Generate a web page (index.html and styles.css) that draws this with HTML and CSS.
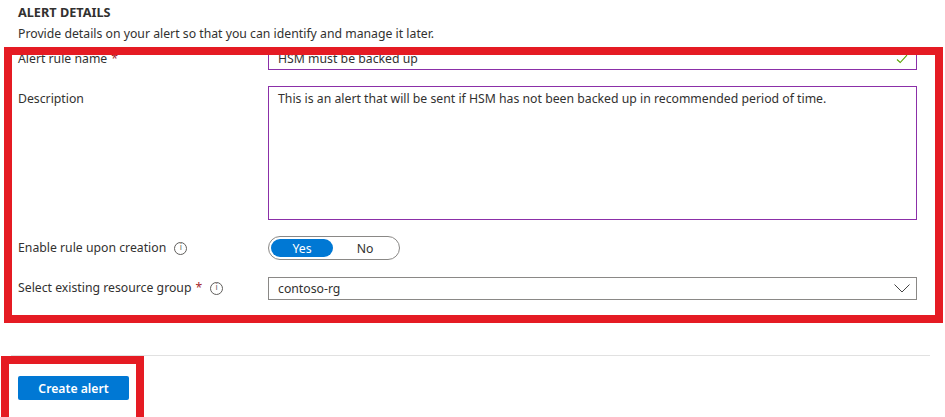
FILE: index.html
```html
<!DOCTYPE html>
<html>
<head>
<meta charset="utf-8">
<link rel="stylesheet" href="styles.css">
</head>
<body>
<div class="page">
  <div class="title">ALERT DETAILS</div>
  <div class="subtitle">Provide details on your alert so that you can identify and manage it later.</div>
  <div class="form">
    <div class="label">Alert rule name <span class="req">*</span></div>
    <div class="field input valid">
      <span>HSM must be backed up</span>
      <svg class="check" width="12" height="10" viewBox="0 0 12 10"><path d="M1 5.5 L4.2 8.5 L11 1.2" fill="none" stroke="#57a300" stroke-width="1.1"/></svg>
    </div>

    <div class="label label-top">Description</div>
    <div class="field textarea">This is an alert that will be sent if HSM has not been backed up in recommended period of time.</div>

    <div class="label">Enable rule upon creation <span class="info">i</span></div>
    <div class="toggle">
      <span class="opt on">Yes</span>
      <span class="opt">No</span>
    </div>

    <div class="label">Select existing resource group <span class="req">*</span> <span class="info">i</span></div>
    <div class="field select">
      <span>contoso-rg</span>
      <svg class="chev" width="16" height="9" viewBox="0 0 16 9"><path d="M0.5 0.5 L8 8 L15.5 0.5" fill="none" stroke="#444" stroke-width="1"/></svg>
    </div>
  </div>
  <div class="sep"></div>
  <div class="actions">
    <button class="primary">Create alert</button>
  </div>
</div>
<div class="mark mark-form"></div>
<div class="mark mark-btn"></div>
</body>
</html>
```

FILE: styles.css
```css
html, body {
  margin: 0;
  padding: 0;
  background: #fff;
}
body {
  font-family: "Noto Sans", "Open Sans", sans-serif;
  font-size: 12.25px;
  color: #323130;
  width: 945px;
  height: 417px;
  overflow: hidden;
  position: relative;
}
.page {
  padding: 3px 0 0 18px;
}
.title {
  font-size: 12.7px;
  font-weight: 700;
  line-height: 18px;
}
.subtitle {
  margin-top: 4px;
  line-height: 18px;
}
.form {
  margin-top: 4px;
  display: grid;
  grid-template-columns: 250px 649px;
  row-gap: 16px;
  align-items: center;
}
.label {
  display: flex;
  align-items: center;
  line-height: 18px;
}
.label-top {
  align-self: start;
  padding-top: 4px;
}
.req {
  color: #a4262c;
  margin-left: 4px;
}
.info {
  display: inline-flex;
  align-items: center;
  justify-content: center;
  width: 11px;
  height: 11px;
  border: 1px solid #605e5c;
  border-radius: 50%;
  font-size: 8px;
  line-height: 1;
  color: #605e5c;
  margin-left: 8px;
  font-family: "DejaVu Sans", sans-serif;
}
.field {
  box-sizing: border-box;
  border: 1px solid #8a8886;
  background: #fff;
  padding: 0 10px 0 9px;
  display: flex;
  align-items: center;
  justify-content: space-between;
  line-height: 18px;
}
.input {
  height: 23px;
  border-color: #8b2fa8;
}
.check {
  margin-right: -2px;
}
.textarea {
  height: 134px;
  border-color: #8b2fa8;
  align-items: flex-start;
  padding-top: 3px;
}
.toggle {
  box-sizing: border-box;
  width: 132px;
  height: 24px;
  border: 1px solid #8a8886;
  border-radius: 12px;
  padding: 2px;
  display: flex;
  margin: 0;
}
.opt {
  flex: 1;
  display: flex;
  align-items: center;
  justify-content: center;
  border-radius: 10px;
  color: #323130;
}
.opt.on {
  flex: 0 0 62px;
  background: #0078d4;
  color: #fff;
}
.select {
  height: 23px;
  margin-top: 1px;
}
.chev {
  margin-right: -4px;
}
.sep {
  margin: 55px 15px 0 -7px;
  height: 1px;
  background: #e1e1e1;
}
.actions {
  padding-top: 20px;
}
.primary {
  width: 111px;
  height: 24px;
  border: none;
  border-radius: 2px;
  background: #0078d4;
  color: #fff;
  font-family: "Noto Sans", "Open Sans", sans-serif;
  font-size: 12.2px;
  font-weight: 600;
  padding: 0;
}
.mark {
  position: absolute;
  box-sizing: border-box;
  border: 8px solid #e51b23;
}
.mark-form {
  left: 4px;
  top: 47px;
  width: 939px;
  height: 276px;
}
.mark-btn {
  left: 1px;
  top: 356px;
  width: 143px;
  height: 70px;
}
```
